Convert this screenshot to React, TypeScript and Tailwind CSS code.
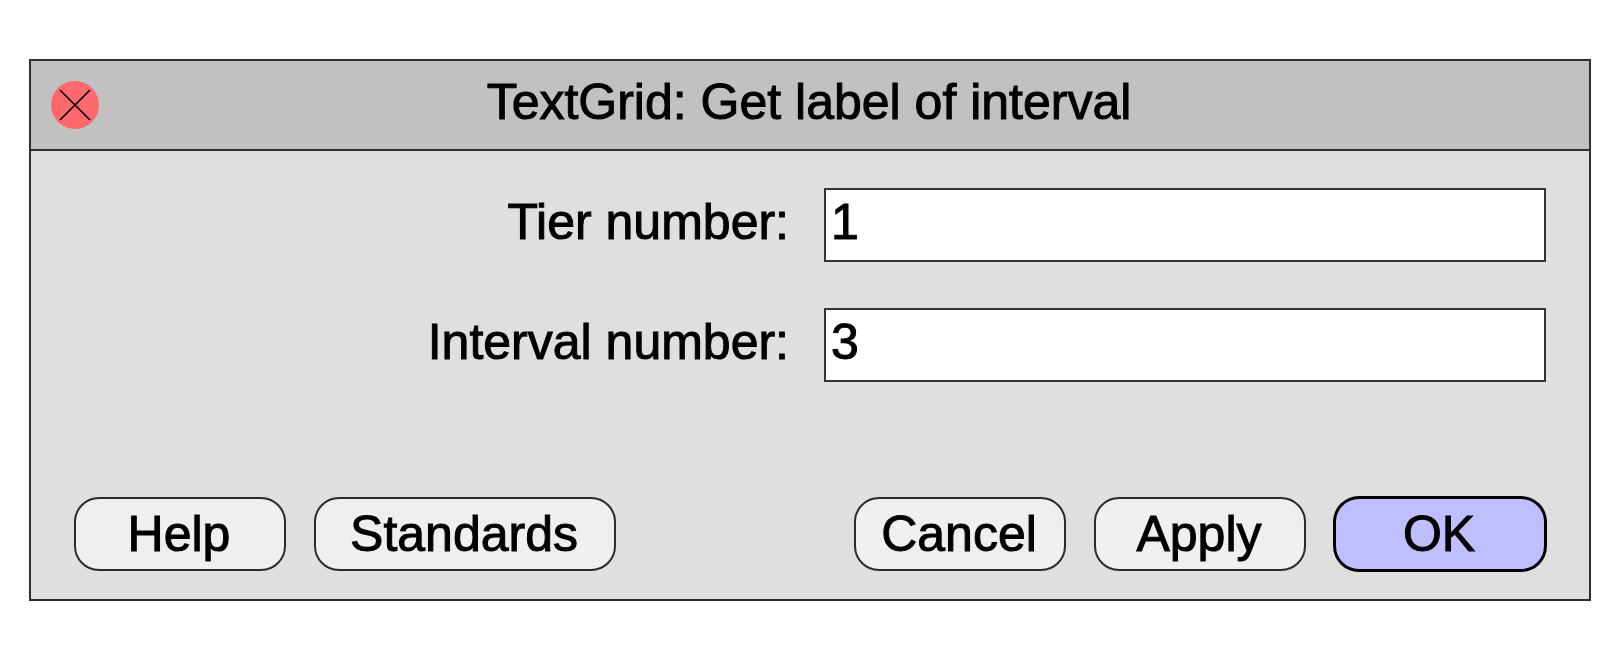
import { useState, type FormEvent, type ReactNode } from "react";

type FieldProps = {
  id: string;
  label: string;
  value: string;
  onChange: (value: string) => void;
};

function Field({ id, label, value, onChange }: FieldProps) {
  return (
    <div className="grid grid-cols-[750fr_722fr] items-stretch">
      <label
        htmlFor={id}
        className="flex items-center justify-end pr-[35px] pb-1.5 whitespace-nowrap"
      >
        {label}
      </label>
      <input
        id={id}
        type="text"
        inputMode="numeric"
        value={value}
        onChange={(event) => onChange(event.target.value)}
        className="h-[74px] w-full min-w-0 rounded-none border-2 border-[#333333] bg-white px-[5px] pb-1.5 outline-none"
      />
    </div>
  );
}

type PushButtonProps = {
  children: ReactNode;
  wide?: boolean;
  primary?: boolean;
  onClick?: () => void;
};

function PushButton({ children, wide, primary, onClick }: PushButtonProps) {
  const width = wide ? "w-[302px]" : "w-[212px]";
  const tone = primary
    ? "border-black bg-[#bfbfff] ring-1 ring-black"
    : "border-[#2b2b2b] bg-[#efefef]";
  return (
    <button
      type={primary ? "submit" : "button"}
      onClick={onClick}
      className={`flex h-[74px] items-center justify-center rounded-[25px] border-2 pr-0.5 ${width} ${tone}`}
    >
      {children}
    </button>
  );
}

const DEFAULTS = { tier: "1", interval: "3" };

export default function App() {
  const [tier, setTier] = useState(DEFAULTS.tier);
  const [interval, setInterval] = useState(DEFAULTS.interval);

  const restore = () => {
    setTier(DEFAULTS.tier);
    setInterval(DEFAULTS.interval);
  };

  const submit = (event: FormEvent) => event.preventDefault();

  return (
    <main className="bg-white px-[29px] py-[59px] font-['Liberation_Sans',Arial,sans-serif] text-[50px] leading-[56px] text-black [-webkit-text-stroke:1px_black]">
      <section
        role="dialog"
        aria-labelledby="dialog-title"
        className="border-2 border-[#2f2f2f] bg-[#dfdfdf]"
      >
        <header className="grid h-[90px] grid-cols-[48px_1fr_48px] items-center border-b-2 border-[#2f2f2f] bg-[#c1c1c1] px-5">
          <button type="button" aria-label="Close" className="size-12">
            <svg viewBox="0 0 48 48" className="size-12" aria-hidden="true">
              <circle cx="24" cy="24" r="24" fill="#ff696d" />
              <path
                d="M9 9L39 39M39 9L9 39"
                stroke="#000"
                strokeWidth="1.6"
                fill="none"
              />
            </svg>
          </button>
          <h1 id="dialog-title" className="pr-0.5 pb-1.5 text-center whitespace-nowrap">
            TextGrid: Get label of interval
          </h1>
        </header>
        <form onSubmit={submit} className="px-[43px] pt-[37px] pb-7">
          <div className="flex flex-col gap-[46px]">
            <Field id="tier" label="Tier number:" value={tier} onChange={setTier} />
            <Field
              id="interval"
              label="Interval number:"
              value={interval}
              onChange={setInterval}
            />
          </div>
          <div className="mt-[115px] flex flex-wrap justify-between gap-7">
            <div className="flex gap-7">
              <PushButton>Help</PushButton>
              <PushButton wide onClick={restore}>
                Standards
              </PushButton>
            </div>
            <div className="flex gap-7">
              <PushButton>Cancel</PushButton>
              <PushButton>Apply</PushButton>
              <PushButton primary>OK</PushButton>
            </div>
          </div>
        </form>
      </section>
    </main>
  );
}
